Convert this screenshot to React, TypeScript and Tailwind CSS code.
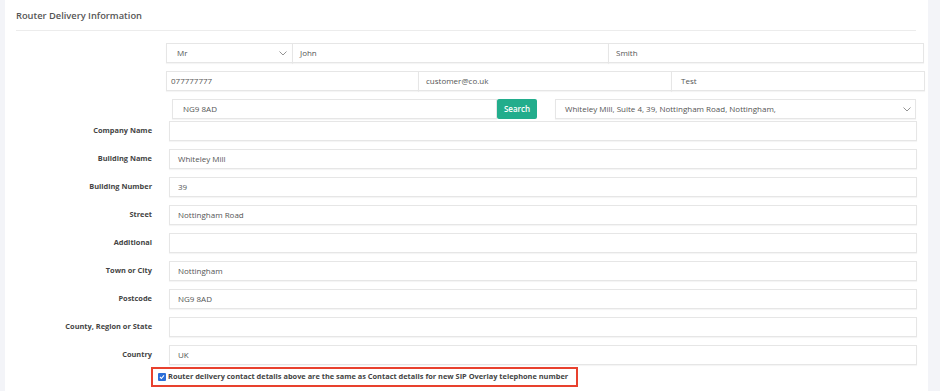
import React from "react";

const Chevron = ({ className = "" }: { className?: string }) => (
  <svg width="8" height="5" viewBox="0 0 8 5" className={className}>
    <polyline points="0.5,0.5 4,4 7.5,0.5" fill="none" stroke="#888" strokeWidth="0.9" />
  </svg>
);

const Box = ({ w, text, pl = "pl-[8px]", className = "", children }: { w: string; text?: string; pl?: string; className?: string; children?: React.ReactNode }) => (
  <div className={`${w} h-[20px] border border-[#e6e6e6] bg-white shadow-[0_1px_1px_rgba(0,0,0,0.04)] flex items-center ${pl} text-[8px] text-[#555] shrink-0 ${className}`}>
    {text}
    {children}
  </div>
);

const rows: [string, string][] = [
  ["Company Name", ""],
  ["Building Name", "Whiteley Mill"],
  ["Building Number", "39"],
  ["Street", "Nottingham Road"],
  ["Additional", ""],
  ["Town or City", "Nottingham"],
  ["Postcode", "NG9 8AD"],
  ["County, Region or State", ""],
  ["Country", "UK"],
];

export default function App() {
  return (
    <div className="w-[940px] h-[391px] bg-[#f3f4f8] pl-[5px] pr-[12px] overflow-hidden" style={{ fontFamily: '"Open Sans", sans-serif' }}>
      <div className="bg-white h-full pl-[11px]">
        <div className="h-[31px] w-[900px] border-b border-[#ececec] flex items-center pt-[1px]">
          <span className="text-[9.3px] font-semibold text-[#555]">Router Delivery Information</span>
        </div>
        <div className="ml-[150px] w-[759px] pt-[12px] flex flex-col gap-[8px]">
          <div className="flex">
            <Box w="w-[127px]" pl="pl-[10px]" className="justify-between pr-[5px]">
              <span>Mr</span>
              <Chevron />
            </Box>
            <Box w="w-[317px]" pl="pl-[7px]" text="John" className="-ml-px" />
            <Box w="w-[316px]" pl="pl-[7px]" text="Smith" className="-ml-px" />
          </div>
          <div className="flex">
            <Box w="w-[253px]" pl="pl-[4px]" text="077777777" />
            <Box w="w-[254px]" pl="pl-[7px]" text="customer@co.uk" className="-ml-px" />
            <Box w="w-[254px]" pl="pl-[9px]" text="Test" className="-ml-px" />
          </div>
          <div className="flex items-center">
            <Box w="w-[325px]" pl="pl-[10px]" text="NG9 8AD" className="ml-[6px]" />
            <div className="w-[40px] h-[20px] bg-[#22ad8c] rounded-[2px] text-white text-[8px] font-semibold flex items-center justify-center">Search</div>
            <Box w="w-[361px]" pl="pl-[9px]" className="ml-[18px] justify-between pr-[4px]">
              <span>Whiteley Mill, Suite 4, 39, Nottingham Road, Nottingham,</span>
              <Chevron />
            </Box>
          </div>
        </div>
        <div className="flex flex-col gap-[8px] mt-[2px]">
          {rows.map(([label, value]) => (
            <div key={label} className="flex items-center">
              <div className="w-[136px] text-right text-[7.4px] font-bold text-[#444]">{label}</div>
              <Box w="w-[748px]" text={value} className="ml-[17px]" />
            </div>
          ))}
        </div>
        <div className="ml-[135px] mt-[2px] w-[427px] h-[20px] border-2 border-[#e8412e] flex items-center pl-[5px]">
          <div className="w-[8px] h-[8px] rounded-[1px] bg-[#2c6fd8] flex items-center justify-center shrink-0">
            <svg width="6" height="6" viewBox="0 0 6 6">
              <polyline points="1,3 2.4,4.5 5,1.3" fill="none" stroke="white" strokeWidth="1.1" />
            </svg>
          </div>
          <span className="ml-[2px] text-[7.4px] font-bold text-[#444] whitespace-nowrap">Router delivery contact details above are the same as Contact details for new SIP Overlay telephone number</span>
        </div>
      </div>
    </div>
  );
}
